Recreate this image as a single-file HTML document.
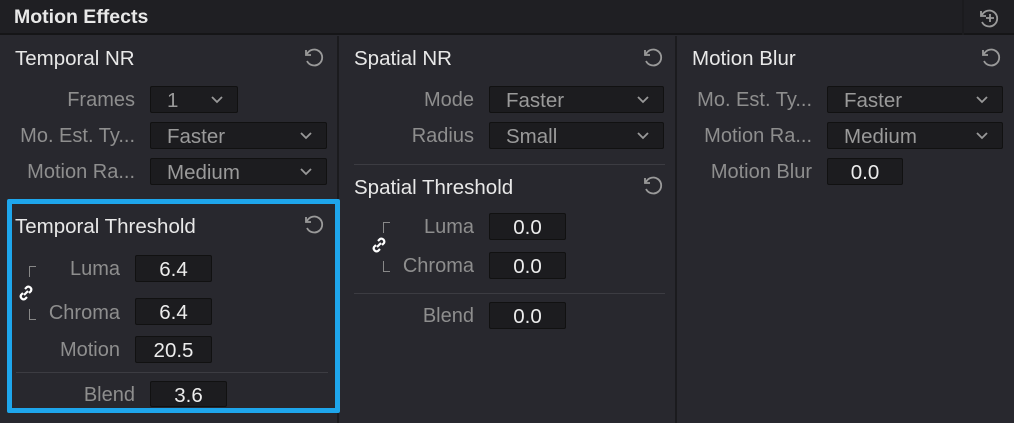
<!DOCTYPE html>
<html><head><style>
*{margin:0;padding:0;box-sizing:border-box}
body{width:1014px;height:423px;background:#28282e;font-family:"Liberation Sans",sans-serif;position:relative;overflow:hidden}
.a{position:absolute}
.hdr{left:0;top:0;width:1014px;height:35px;background:#1f1f23;border-bottom:2px solid #151517}
.t{position:absolute;color:#e8e8e8;font-size:20.5px;white-space:nowrap}
.l{position:absolute;color:#8e8e8e;font-size:20px;text-align:right;white-space:nowrap;line-height:28px}
.f{position:absolute;background:#1c1c1f;border:1px solid #111;border-radius:2px;height:27px;line-height:27px;font-size:20.5px}
.f.n{color:#ececec;text-align:center}
.f.d{color:#9a9a9a;padding-left:16px}
.f.d svg{position:absolute;right:14px;top:9px}
.sep{position:absolute;background:#1b1b1e;width:2px}
.hl{position:absolute;height:1px;background:#3c3c42}
.r{position:absolute}
</style></head><body>
<div class="a hdr"></div>
<div class="t" style="left:14px;top:6px;font-weight:bold;font-size:19.5px">Motion Effects</div>
<div class="sep" style="left:962px;top:0;height:35px"></div>
<svg class="r" style="left:978px;top:7px" width="22" height="22" viewBox="0 0 22 22" fill="none" stroke="#9a9a9a" stroke-width="1.8"><path d="M4 8A8 8 0 1 1 4 15"/><path d="M3 4v5h5"/><path d="M12 7v8M8 11h8"/></svg>
<div class="sep" style="left:337px;top:36px;height:387px"></div>
<div class="sep" style="left:675px;top:36px;height:387px"></div>

<!-- col1 -->
<div class="t" style="left:15px;top:47px">Temporal NR</div>
<div class="l" style="right:879px;top:86px">Frames</div>
<div class="f d" style="left:150px;top:86px;width:88px">1<svg width="12" height="8"><path d="M1 1l5 5 5-5" stroke="#999" stroke-width="1.8" fill="none"/></svg></div>
<div class="l" style="right:879px;top:122px">Mo. Est. Ty...</div>
<div class="f d" style="left:150px;top:122px;width:177px">Faster<svg width="12" height="8"><path d="M1 1l5 5 5-5" stroke="#999" stroke-width="1.8" fill="none"/></svg></div>
<div class="l" style="right:879px;top:158px">Motion Ra...</div>
<div class="f d" style="left:150px;top:158px;width:177px">Medium<svg width="12" height="8"><path d="M1 1l5 5 5-5" stroke="#999" stroke-width="1.8" fill="none"/></svg></div>

<div class="a" style="left:7px;top:199px;width:333px;height:214px;border:5px solid #1ea6ec;border-radius:2px"></div>
<div class="t" style="left:15px;top:215px">Temporal Threshold</div>
<div class="a" style="left:29px;top:266px;width:7px;height:11px;border-left:1px solid #888;border-top:1px solid #888"></div>
<div class="a" style="left:29px;top:309px;width:7px;height:11px;border-left:1px solid #888;border-bottom:1px solid #888"></div>
<svg class="r" style="left:17px;top:284px" width="18" height="18" viewBox="0 0 18 18" fill="none" stroke="#fff" stroke-width="2.2"><path d="M8 5l2-2a3 3 0 0 1 4 4l-2 2"/><path d="M10 13l-2 2a3 3 0 0 1-4-4l2-2"/><path d="M7 11l4-4"/></svg>
<div class="l" style="right:894px;top:255px">Luma</div>
<div class="f n" style="left:135px;top:255px;width:77px">6.4</div>
<div class="l" style="right:894px;top:299px">Chroma</div>
<div class="f n" style="left:135px;top:298px;width:77px">6.4</div>
<div class="l" style="right:894px;top:336px">Motion</div>
<div class="f n" style="left:135px;top:336px;width:77px">20.5</div>
<div class="hl" style="left:16px;top:372px;width:312px"></div>
<div class="l" style="right:879px;top:381px">Blend</div>
<div class="f n" style="left:150px;top:381px;width:77px;height:26px">3.6</div>

<!-- col2 -->
<div class="t" style="left:354px;top:47px">Spatial NR</div>
<div class="l" style="right:540px;top:86px">Mode</div>
<div class="f d" style="left:489px;top:86px;width:175px">Faster<svg width="12" height="8"><path d="M1 1l5 5 5-5" stroke="#999" stroke-width="1.8" fill="none"/></svg></div>
<div class="l" style="right:540px;top:122px">Radius</div>
<div class="f d" style="left:489px;top:122px;width:175px">Small<svg width="12" height="8"><path d="M1 1l5 5 5-5" stroke="#999" stroke-width="1.8" fill="none"/></svg></div>
<div class="hl" style="left:354px;top:164px;width:311px"></div>
<div class="t" style="left:354px;top:176px">Spatial Threshold</div>
<div class="a" style="left:383px;top:222px;width:7px;height:11px;border-left:1px solid #888;border-top:1px solid #888"></div>
<div class="a" style="left:383px;top:261px;width:7px;height:11px;border-left:1px solid #888;border-bottom:1px solid #888"></div>
<svg class="r" style="left:370px;top:236px" width="18" height="18" viewBox="0 0 18 18" fill="none" stroke="#fff" stroke-width="2.2"><path d="M8 5l2-2a3 3 0 0 1 4 4l-2 2"/><path d="M10 13l-2 2a3 3 0 0 1-4-4l2-2"/><path d="M7 11l4-4"/></svg>
<div class="l" style="right:540px;top:213px">Luma</div>
<div class="f n" style="left:489px;top:213px;width:77px">0.0</div>
<div class="l" style="right:540px;top:252px">Chroma</div>
<div class="f n" style="left:489px;top:252px;width:77px">0.0</div>
<div class="hl" style="left:354px;top:293px;width:311px"></div>
<div class="l" style="right:540px;top:302px">Blend</div>
<div class="f n" style="left:489px;top:302px;width:77px">0.0</div>

<!-- col3 -->
<div class="t" style="left:692px;top:47px">Motion Blur</div>
<div class="l" style="right:202px;top:86px">Mo. Est. Ty...</div>
<div class="f d" style="left:827px;top:86px;width:176px">Faster<svg width="12" height="8"><path d="M1 1l5 5 5-5" stroke="#999" stroke-width="1.8" fill="none"/></svg></div>
<div class="l" style="right:202px;top:122px">Motion Ra...</div>
<div class="f d" style="left:827px;top:122px;width:176px">Medium<svg width="12" height="8"><path d="M1 1l5 5 5-5" stroke="#999" stroke-width="1.8" fill="none"/></svg></div>
<div class="l" style="right:202px;top:158px">Motion Blur</div>
<div class="f n" style="left:827px;top:158px;width:76px">0.0</div>

<!-- reset icons -->
<svg class="r" style="left:303px;top:46px" width="22" height="22" viewBox="0 0 22 22" fill="none" stroke="#9a9a9a" stroke-width="1.8"><path d="M4 8A8 8 0 1 1 4 15"/><path d="M3 4v5h5"/></svg>
<svg class="r" style="left:642px;top:46px" width="22" height="22" viewBox="0 0 22 22" fill="none" stroke="#9a9a9a" stroke-width="1.8"><path d="M4 8A8 8 0 1 1 4 15"/><path d="M3 4v5h5"/></svg>
<svg class="r" style="left:980px;top:46px" width="22" height="22" viewBox="0 0 22 22" fill="none" stroke="#9a9a9a" stroke-width="1.8"><path d="M4 8A8 8 0 1 1 4 15"/><path d="M3 4v5h5"/></svg>
<svg class="r" style="left:642px;top:174px" width="22" height="22" viewBox="0 0 22 22" fill="none" stroke="#9a9a9a" stroke-width="1.8"><path d="M4 8A8 8 0 1 1 4 15"/><path d="M3 4v5h5"/></svg>
<svg class="r" style="left:303px;top:213px" width="22" height="22" viewBox="0 0 22 22" fill="none" stroke="#9a9a9a" stroke-width="1.8"><path d="M4 8A8 8 0 1 1 4 15"/><path d="M3 4v5h5"/></svg>
</body></html>
